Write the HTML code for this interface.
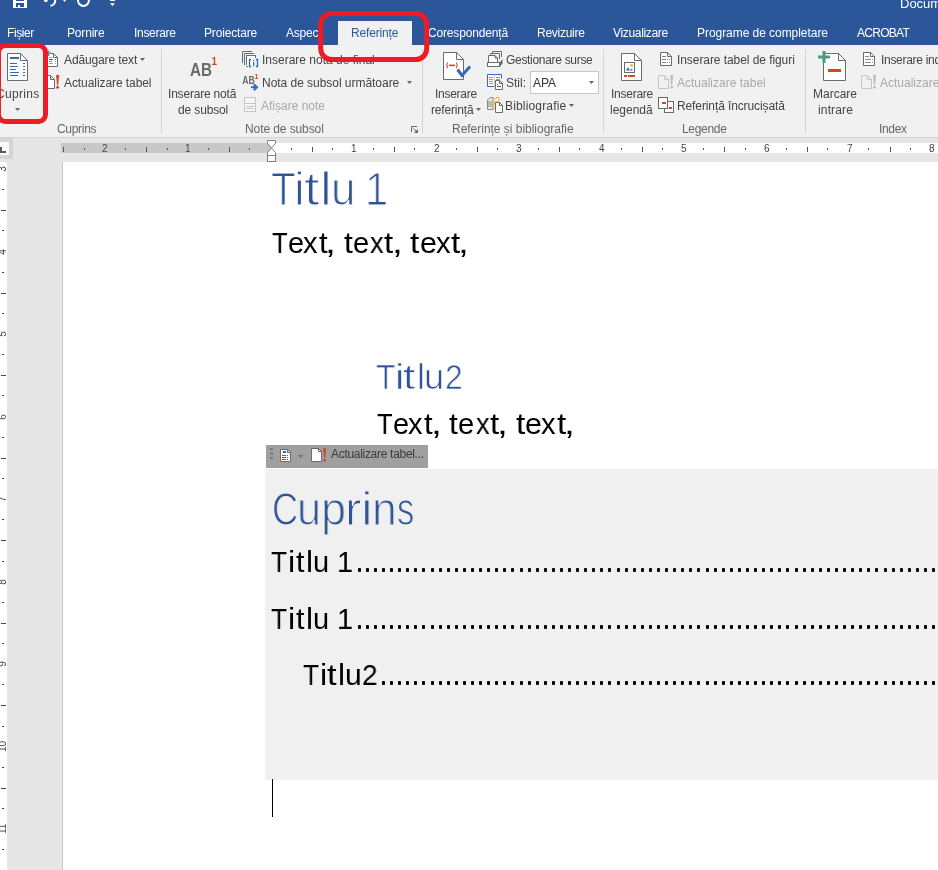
<!DOCTYPE html>
<html><head><meta charset="utf-8"><style>
*{margin:0;padding:0;box-sizing:border-box}
html,body{width:938px;height:870px;overflow:hidden;background:#fff;font-family:"Liberation Sans",sans-serif}
.a{position:absolute;white-space:pre;will-change:transform}
svg{position:absolute;overflow:visible}
#title{position:absolute;left:0;top:0;width:938px;height:45px;background:#2B579A}
.tab{position:absolute;top:27px;font-size:12px;color:#fff;line-height:12px;white-space:pre;will-change:transform}
#ribbon{position:absolute;left:0;top:45px;width:938px;height:92px;background:#F1F1F1}
.rt{position:absolute;font-size:12px;color:#444;line-height:14px;white-space:pre}
.gl{position:absolute;font-size:12px;color:#666;line-height:14px;top:122px;white-space:pre}
.dis{color:#B1B1B1}
.sep{position:absolute;top:49px;width:1px;height:84px;background:#D4D4D4}
#rulerbar{position:absolute;left:0;top:137px;width:938px;height:25px;background:#E6E6E6}
#docbg{position:absolute;left:0;top:161px;width:62px;height:709px;background:#E6E6E6}
#vruler{position:absolute;left:0;top:162px;width:7px;height:708px;background:#fff}
#page{position:absolute;left:62px;top:162px;width:876px;height:708px;background:#fff;border-left:1px solid #C6C6C6}
.h{position:absolute;color:#2F5496;white-space:pre}
.b{position:absolute;color:#000;white-space:pre}
.rn{position:absolute;font-size:9px;line-height:9px;color:#444;white-space:pre;will-change:transform}
</style></head><body>
<div id="title"></div>
<div style="position:absolute;left:338px;top:21px;width:74px;height:24px;background:#F1F1F1"></div>
<div class="tab" style="left:7px;letter-spacing:-0.4px">Fișier</div>
<div class="tab" style="left:67px;letter-spacing:-0.18px">Pornire</div>
<div class="tab" style="left:134px;letter-spacing:-0.3px">Inserare</div>
<div class="tab" style="left:204px;letter-spacing:-0.17px">Proiectare</div>
<div class="tab" style="left:286px;letter-spacing:-0.2px">Aspect</div>
<div class="tab" style="left:351px;letter-spacing:-0.17px;color:#2B579A">Referințe</div>
<div class="tab" style="left:428px;letter-spacing:-0.16px">Corespondență</div>
<div class="tab" style="left:537px;letter-spacing:-0.27px">Revizuire</div>
<div class="tab" style="left:613px;letter-spacing:-0.33px">Vizualizare</div>
<div class="tab" style="left:697px;letter-spacing:-0.05px">Programe de completare</div>
<div class="tab" style="left:857px;letter-spacing:-0.73px">ACROBAT</div>
<div class="a" style="left:900px;top:-3px;font-size:13px;line-height:13px;color:#fff">Docum</div>
<svg style="left:0;top:0" width="130" height="12"><path fill="#fff" fill-rule="evenodd" d="M13 -5H27V8H13Z M16 -5H24V1H16Z M16 3H24V7H20V5H18V7H16Z"/><path d="M55 -0.5A5 5 0 0 1 50.5 5.8" fill="none" stroke="#fff" stroke-width="2"/><path d="M43.5 -1H48.3L47 1.9H44.5Z" fill="#fff"/><circle cx="83.45" cy="0.45" r="5.45" fill="none" stroke="#fff" stroke-width="2"/><path d="M63 0H66.2L64.6 2Z M110 -1H115V1H110Z M110 3.2H115L112.5 5.9Z" fill="#fff"/></svg>
<div id="ribbon"></div>
<div class="sep" style="left:161px"></div>
<div class="sep" style="left:422px"></div>
<div class="sep" style="left:603px"></div>
<div class="sep" style="left:805px"></div>
<div class="a" style="left:-4.3px;top:87.84px;font-size:12px;line-height:12px;color:#444;letter-spacing:0.3px">Cuprins</div>
<svg style="left:15px;top:108px" width="6" height="4"><path d="M0 0H5L2.5 3Z" fill="#666"/></svg>
<div class="a" style="left:63.8px;top:53.54px;font-size:12px;line-height:12px;color:#444;letter-spacing:-0.125px">Adăugare text</div>
<svg style="left:140px;top:58px" width="6" height="4"><path d="M0 0H5L2.5 3Z" fill="#666"/></svg>
<div class="a" style="left:63.8px;top:76.54px;font-size:12px;line-height:12px;color:#444;letter-spacing:-0.075px">Actualizare tabel</div>
<div class="a" style="left:56.8px;top:122.84px;font-size:12px;line-height:12px;color:#666;letter-spacing:-0.300px">Cuprins</div>
<div class="a" style="left:168.3px;top:87.84px;font-size:12px;line-height:12px;color:#444;letter-spacing:-0.200px">Inserare notă</div>
<div class="a" style="left:177.8px;top:103.84px;font-size:12px;line-height:12px;color:#444;letter-spacing:-0.138px">de subsol</div>
<div class="a" style="left:261.5px;top:53.54px;font-size:12px;line-height:12px;color:#444">Inserare nota de final</div>
<div class="a" style="left:261.8px;top:76.54px;font-size:12px;line-height:12px;color:#444;letter-spacing:-0.035px">Nota de subsol următoare</div>
<svg style="left:407px;top:81px" width="6" height="4"><path d="M0 0H5L2.5 3Z" fill="#666"/></svg>
<div class="a" style="left:260.8px;top:99.64px;font-size:12px;line-height:12px;color:#A8A8A8">Afișare note</div>
<div class="a" style="left:245.2px;top:122.84px;font-size:12px;line-height:12px;color:#666;letter-spacing:-0.092px">Note de subsol</div>
<div class="a" style="left:435.40000000000003px;top:87.84px;font-size:12px;line-height:12px;color:#444;letter-spacing:-0.271px">Inserare</div>
<div class="a" style="left:430.8px;top:103.84px;font-size:12px;line-height:12px;color:#444;letter-spacing:-0.175px">referință</div>
<svg style="left:476px;top:108px" width="6" height="4"><path d="M0 0H5L2.5 3Z" fill="#666"/></svg>
<div class="a" style="left:505.7px;top:53.54px;font-size:12px;line-height:12px;color:#444;letter-spacing:-0.307px">Gestionare surse</div>
<div class="a" style="left:506.1px;top:76.54px;font-size:12px;line-height:12px;color:#444">Stil:</div>
<div style="position:absolute;left:530px;top:71px;width:69px;height:23px;background:#fff;border:1px solid #C6C6C6"></div>
<div class="a" style="left:533px;top:76.84px;font-size:12px;line-height:12px;color:#333">APA</div>
<svg style="left:589px;top:81px" width="6" height="4"><path d="M0 0H5L2.5 3Z" fill="#666"/></svg>
<div class="a" style="left:505.3px;top:99.64px;font-size:12px;line-height:12px;color:#444;letter-spacing:0.164px">Bibliografie</div>
<svg style="left:569px;top:104px" width="6" height="4"><path d="M0 0H5L2.5 3Z" fill="#666"/></svg>
<div class="a" style="left:452.40000000000003px;top:122.84px;font-size:12px;line-height:12px;color:#666;letter-spacing:-0.021px">Referințe și bibliografie</div>
<div class="a" style="left:610.8px;top:87.84px;font-size:12px;line-height:12px;color:#444;letter-spacing:-0.257px">Inserare</div>
<div class="a" style="left:610.2px;top:103.84px;font-size:12px;line-height:12px;color:#444">legendă</div>
<div class="a" style="left:677.2px;top:53.54px;font-size:12px;line-height:12px;color:#444;letter-spacing:-0.070px">Inserare tabel de figuri</div>
<div class="a" style="left:677.0px;top:76.54px;font-size:12px;line-height:12px;color:#A8A8A8">Actualizare tabel</div>
<div class="a" style="left:677.0px;top:99.64px;font-size:12px;line-height:12px;color:#444;letter-spacing:-0.110px">Referință încrucișată</div>
<div class="a" style="left:682.2px;top:122.84px;font-size:12px;line-height:12px;color:#666;letter-spacing:-0.317px">Legende</div>
<div class="a" style="left:812.8px;top:87.84px;font-size:12px;line-height:12px;color:#444">Marcare</div>
<div class="a" style="left:817.6px;top:103.84px;font-size:12px;line-height:12px;color:#444;letter-spacing:0.150px">intrare</div>
<div class="a" style="left:880.5px;top:53.54px;font-size:12px;line-height:12px;color:#444;letter-spacing:-0.3px">Inserare index</div>
<div class="a" style="left:880px;top:76.54px;font-size:12px;line-height:12px;color:#A8A8A8">Actualizare tabel</div>
<div class="a" style="left:879.4px;top:122.84px;font-size:12px;line-height:12px;color:#666;letter-spacing:-0.325px">Index</div>
<svg style="left:411px;top:126px" width="8" height="8"><path d="M0.5 6V0.5H6" fill="none" stroke="#666"/><path d="M2.5 2.5L5.5 5.5" stroke="#666"/><path d="M7 3V7H3Z" fill="#666"/></svg>
<div id="rulerbar"></div>
<div id="docbg"></div>
<div id="vruler"></div>
<div id="page"></div>
<div style="position:absolute;left:0;top:137px;width:938px;height:1px;background:#D5D5D5"></div>
<div style="position:absolute;left:0;top:138px;width:13px;height:21px;background:#D6D6D6"></div>
<div style="position:absolute;left:0;top:142px;width:9px;height:13px;background:#FAFAFA"></div>
<div style="position:absolute;left:0;top:147px;width:2px;height:6px;background:#5A5A5A"></div><div style="position:absolute;left:0;top:151px;width:6px;height:2px;background:#5A5A5A"></div>
<div style="position:absolute;left:61px;top:143px;width:210px;height:10px;background:#C8C8C8"></div>
<div style="position:absolute;left:271px;top:143px;width:667px;height:10px;background:#fff"></div>
<div class="rn" style="left:102.4px;top:144px;font-size:10px;line-height:10px">2</div>
<div class="rn" style="left:185.0px;top:144px;font-size:10px;line-height:10px">1</div>
<div class="rn" style="left:351.1px;top:144px;font-size:10px;line-height:10px">1</div>
<div class="rn" style="left:433.7px;top:144px;font-size:10px;line-height:10px">2</div>
<div class="rn" style="left:516.3px;top:144px;font-size:10px;line-height:10px">3</div>
<div class="rn" style="left:598.8px;top:144px;font-size:10px;line-height:10px">4</div>
<div class="rn" style="left:681.4px;top:144px;font-size:10px;line-height:10px">5</div>
<div class="rn" style="left:764.0px;top:144px;font-size:10px;line-height:10px">6</div>
<div class="rn" style="left:846.6px;top:144px;font-size:10px;line-height:10px">7</div>
<div class="rn" style="left:929.1px;top:144px;font-size:10px;line-height:10px">8</div>
<svg style="left:0;top:0" width="938" height="160"><g fill="#555"><rect x="63" y="147" width="1" height="5"/><rect x="84" y="148" width="1" height="2"/><rect x="125" y="148" width="1" height="2"/><rect x="146" y="147" width="1" height="5"/><rect x="167" y="148" width="1" height="2"/><rect x="208" y="148" width="1" height="2"/><rect x="229" y="147" width="1" height="5"/><rect x="249" y="148" width="1" height="2"/><rect x="291" y="148" width="1" height="2"/><rect x="312" y="147" width="1" height="5"/><rect x="332" y="148" width="1" height="2"/><rect x="373" y="148" width="1" height="2"/><rect x="394" y="147" width="1" height="5"/><rect x="414" y="148" width="1" height="2"/><rect x="456" y="148" width="1" height="2"/><rect x="477" y="147" width="1" height="5"/><rect x="497" y="148" width="1" height="2"/><rect x="538" y="148" width="1" height="2"/><rect x="559" y="147" width="1" height="5"/><rect x="579" y="148" width="1" height="2"/><rect x="621" y="148" width="1" height="2"/><rect x="642" y="147" width="1" height="5"/><rect x="662" y="148" width="1" height="2"/><rect x="703" y="148" width="1" height="2"/><rect x="724" y="147" width="1" height="5"/><rect x="745" y="148" width="1" height="2"/><rect x="786" y="148" width="1" height="2"/><rect x="807" y="147" width="1" height="5"/><rect x="827" y="148" width="1" height="2"/><rect x="868" y="148" width="1" height="2"/><rect x="890" y="147" width="1" height="5"/><rect x="910" y="148" width="1" height="2"/></g></svg>
<svg style="left:0;top:0" width="300" height="170"><path d="M267.5 140.5H275.5V143.5L271.5 148L275.5 152.5V155.5H267.5V152.5L271.5 148L267.5 143.5Z" fill="#fff" stroke="#808080"/><rect x="267.5" y="155.5" width="8" height="6" fill="#fff" stroke="#808080"/></svg>
<div class="rn" style="left:-2px;top:163.9px;width:10px;height:10px;font-size:10px;line-height:10px;text-align:center;transform:rotate(-90deg)">3</div>
<div class="rn" style="left:-2px;top:246.5px;width:10px;height:10px;font-size:10px;line-height:10px;text-align:center;transform:rotate(-90deg)">4</div>
<div class="rn" style="left:-2px;top:329.0px;width:10px;height:10px;font-size:10px;line-height:10px;text-align:center;transform:rotate(-90deg)">5</div>
<div class="rn" style="left:-2px;top:411.5px;width:10px;height:10px;font-size:10px;line-height:10px;text-align:center;transform:rotate(-90deg)">6</div>
<div class="rn" style="left:-2px;top:494.1px;width:10px;height:10px;font-size:10px;line-height:10px;text-align:center;transform:rotate(-90deg)">7</div>
<div class="rn" style="left:-2px;top:576.6px;width:10px;height:10px;font-size:10px;line-height:10px;text-align:center;transform:rotate(-90deg)">8</div>
<div class="rn" style="left:-2px;top:659.2px;width:10px;height:10px;font-size:10px;line-height:10px;text-align:center;transform:rotate(-90deg)">9</div>
<div class="rn" style="left:-2px;top:741.8px;width:10px;height:10px;font-size:10px;line-height:10px;text-align:center;transform:rotate(-90deg)">10</div>
<div class="rn" style="left:-2px;top:824.3px;width:10px;height:10px;font-size:10px;line-height:10px;text-align:center;transform:rotate(-90deg)">11</div>
<svg style="left:0;top:0" width="10" height="870"><g fill="#444"><rect x="2" y="189" width="2" height="1"/><rect x="1" y="210" width="5" height="1"/><rect x="2" y="230" width="2" height="1"/><rect x="2" y="272" width="2" height="1"/><rect x="1" y="293" width="5" height="1"/><rect x="2" y="313" width="2" height="1"/><rect x="2" y="354" width="2" height="1"/><rect x="1" y="375" width="5" height="1"/><rect x="2" y="395" width="2" height="1"/><rect x="2" y="437" width="2" height="1"/><rect x="1" y="458" width="5" height="1"/><rect x="2" y="478" width="2" height="1"/><rect x="2" y="519" width="2" height="1"/><rect x="1" y="540" width="5" height="1"/><rect x="2" y="561" width="2" height="1"/><rect x="2" y="602" width="2" height="1"/><rect x="1" y="623" width="5" height="1"/><rect x="2" y="643" width="2" height="1"/><rect x="2" y="684" width="2" height="1"/><rect x="1" y="705" width="5" height="1"/><rect x="2" y="726" width="2" height="1"/><rect x="2" y="767" width="2" height="1"/><rect x="1" y="788" width="5" height="1"/><rect x="2" y="808" width="2" height="1"/><rect x="2" y="849" width="2" height="1"/></g></svg>
<div class="a" style="left:270.74px;top:166.24px;font-size:46.5px;line-height:46.5px;color:#2F5496;-webkit-text-stroke:1.1px #fff;transform:scaleX(0.867);transform-origin:0 0">T</div>
<div class="a" style="left:294.02px;top:166.24px;font-size:46.5px;line-height:46.5px;color:#2F5496;-webkit-text-stroke:1.1px #fff;transform:scaleX(1.041);transform-origin:0 0">i</div>
<div class="a" style="left:304.11px;top:166.24px;font-size:46.5px;line-height:46.5px;color:#2F5496;-webkit-text-stroke:1.1px #fff;transform:scaleX(1.201);transform-origin:0 0">t</div>
<div class="a" style="left:319.73px;top:166.24px;font-size:46.5px;line-height:46.5px;color:#2F5496;-webkit-text-stroke:1.1px #fff;transform:scaleX(1.138);transform-origin:0 0">l</div>
<div class="a" style="left:330.74px;top:166.24px;font-size:46.5px;line-height:46.5px;color:#2F5496;-webkit-text-stroke:1.1px #fff;transform:scaleX(0.944);transform-origin:0 0">u</div>
<div class="a" style="left:365.47px;top:166.24px;font-size:46.5px;line-height:46.5px;color:#2F5496;-webkit-text-stroke:1.1px #fff;transform:scaleX(0.896);transform-origin:0 0">1</div>
<div class="a" style="left:271.87px;top:229.45px;font-size:29px;line-height:29px;color:#000;;transform:scaleX(0.885);transform-origin:0 0">T</div>
<div class="a" style="left:287.60px;top:229.45px;font-size:29px;line-height:29px;color:#000;;transform:scaleX(0.992);transform-origin:0 0">e</div>
<div class="a" style="left:302.70px;top:229.45px;font-size:29px;line-height:29px;color:#000;;transform:scaleX(0.998);transform-origin:0 0">x</div>
<div class="a" style="left:318.59px;top:229.45px;font-size:29px;line-height:29px;color:#000;;transform:scaleX(1.073);transform-origin:0 0">t</div>
<div class="a" style="left:325.24px;top:229.45px;font-size:29px;line-height:29px;color:#000;;transform:scaleX(1.350);transform-origin:0 0">,</div>
<div class="a" style="left:343.88px;top:229.45px;font-size:29px;line-height:29px;color:#000;;transform:scaleX(1.098);transform-origin:0 0">t</div>
<div class="a" style="left:353.09px;top:229.45px;font-size:29px;line-height:29px;color:#000;;transform:scaleX(1.006);transform-origin:0 0">e</div>
<div class="a" style="left:370.23px;top:229.45px;font-size:29px;line-height:29px;color:#000;;transform:scaleX(0.939);transform-origin:0 0">x</div>
<div class="a" style="left:384.47px;top:229.45px;font-size:29px;line-height:29px;color:#000;;transform:scaleX(1.137);transform-origin:0 0">t</div>
<div class="a" style="left:391.64px;top:229.45px;font-size:29px;line-height:29px;color:#000;;transform:scaleX(1.350);transform-origin:0 0">,</div>
<div class="a" style="left:410.26px;top:229.45px;font-size:29px;line-height:29px;color:#000;;transform:scaleX(1.150);transform-origin:0 0">t</div>
<div class="a" style="left:419.73px;top:229.45px;font-size:29px;line-height:29px;color:#000;;transform:scaleX(1.049);transform-origin:0 0">e</div>
<div class="a" style="left:435.59px;top:229.45px;font-size:29px;line-height:29px;color:#000;;transform:scaleX(1.005);transform-origin:0 0">x</div>
<div class="a" style="left:451.26px;top:229.45px;font-size:29px;line-height:29px;color:#000;;transform:scaleX(1.150);transform-origin:0 0">t</div>
<div class="a" style="left:458.14px;top:229.45px;font-size:29px;line-height:29px;color:#000;;transform:scaleX(1.350);transform-origin:0 0">,</div>
<div class="a" style="left:376.33px;top:359.50px;font-size:35.8px;line-height:35.8px;color:#2F5496;-webkit-text-stroke:0.6px #fff;transform:scaleX(0.885);transform-origin:0 0">T</div>
<div class="a" style="left:394.91px;top:359.50px;font-size:35.8px;line-height:35.8px;color:#2F5496;-webkit-text-stroke:0.6px #fff;transform:scaleX(1.180);transform-origin:0 0">i</div>
<div class="a" style="left:403.23px;top:359.50px;font-size:35.8px;line-height:35.8px;color:#2F5496;-webkit-text-stroke:0.6px #fff;transform:scaleX(1.223);transform-origin:0 0">t</div>
<div class="a" style="left:416.93px;top:359.50px;font-size:35.8px;line-height:35.8px;color:#2F5496;-webkit-text-stroke:0.6px #fff;transform:scaleX(0.986);transform-origin:0 0">l</div>
<div class="a" style="left:424.09px;top:359.50px;font-size:35.8px;line-height:35.8px;color:#2F5496;-webkit-text-stroke:0.6px #fff;transform:scaleX(1.014);transform-origin:0 0">u</div>
<div class="a" style="left:444.83px;top:359.50px;font-size:35.8px;line-height:35.8px;color:#2F5496;-webkit-text-stroke:0.6px #fff;transform:scaleX(0.892);transform-origin:0 0">2</div>
<div class="a" style="left:377.27px;top:409.65px;font-size:29px;line-height:29px;color:#000;;transform:scaleX(0.885);transform-origin:0 0">T</div>
<div class="a" style="left:393.00px;top:409.65px;font-size:29px;line-height:29px;color:#000;;transform:scaleX(0.992);transform-origin:0 0">e</div>
<div class="a" style="left:408.10px;top:409.65px;font-size:29px;line-height:29px;color:#000;;transform:scaleX(0.998);transform-origin:0 0">x</div>
<div class="a" style="left:423.99px;top:409.65px;font-size:29px;line-height:29px;color:#000;;transform:scaleX(1.073);transform-origin:0 0">t</div>
<div class="a" style="left:430.64px;top:409.65px;font-size:29px;line-height:29px;color:#000;;transform:scaleX(1.350);transform-origin:0 0">,</div>
<div class="a" style="left:449.28px;top:409.65px;font-size:29px;line-height:29px;color:#000;;transform:scaleX(1.098);transform-origin:0 0">t</div>
<div class="a" style="left:458.49px;top:409.65px;font-size:29px;line-height:29px;color:#000;;transform:scaleX(1.006);transform-origin:0 0">e</div>
<div class="a" style="left:475.63px;top:409.65px;font-size:29px;line-height:29px;color:#000;;transform:scaleX(0.939);transform-origin:0 0">x</div>
<div class="a" style="left:489.87px;top:409.65px;font-size:29px;line-height:29px;color:#000;;transform:scaleX(1.137);transform-origin:0 0">t</div>
<div class="a" style="left:497.04px;top:409.65px;font-size:29px;line-height:29px;color:#000;;transform:scaleX(1.350);transform-origin:0 0">,</div>
<div class="a" style="left:515.66px;top:409.65px;font-size:29px;line-height:29px;color:#000;;transform:scaleX(1.150);transform-origin:0 0">t</div>
<div class="a" style="left:525.13px;top:409.65px;font-size:29px;line-height:29px;color:#000;;transform:scaleX(1.049);transform-origin:0 0">e</div>
<div class="a" style="left:540.99px;top:409.65px;font-size:29px;line-height:29px;color:#000;;transform:scaleX(1.005);transform-origin:0 0">x</div>
<div class="a" style="left:556.66px;top:409.65px;font-size:29px;line-height:29px;color:#000;;transform:scaleX(1.150);transform-origin:0 0">t</div>
<div class="a" style="left:563.54px;top:409.65px;font-size:29px;line-height:29px;color:#000;;transform:scaleX(1.350);transform-origin:0 0">,</div>
<div style="position:absolute;left:265px;top:469px;width:673px;height:310.5px;background:#F0F0F0"></div>
<div style="position:absolute;left:266px;top:445px;width:162px;height:23px;background:#A0A0A0"></div>
<div class="a" style="left:330.6px;top:448.24px;font-size:12px;line-height:12px;color:#3A3A3A;letter-spacing:-0.3px">Actualizare tabel...</div>
<div class="a" style="left:271.89px;top:486.24px;font-size:46.5px;line-height:46.5px;color:#2F5496;-webkit-text-stroke:1.1px #F0F0F0;transform:scaleX(0.781);transform-origin:0 0">C</div>
<div class="a" style="left:297.24px;top:486.24px;font-size:46.5px;line-height:46.5px;color:#2F5496;-webkit-text-stroke:1.1px #F0F0F0;transform:scaleX(0.928);transform-origin:0 0">u</div>
<div class="a" style="left:320.96px;top:486.24px;font-size:46.5px;line-height:46.5px;color:#2F5496;-webkit-text-stroke:1.1px #F0F0F0;transform:scaleX(0.970);transform-origin:0 0">p</div>
<div class="a" style="left:345.28px;top:486.24px;font-size:46.5px;line-height:46.5px;color:#2F5496;-webkit-text-stroke:1.1px #F0F0F0;transform:scaleX(1.058);transform-origin:0 0">r</div>
<div class="a" style="left:360.84px;top:486.24px;font-size:46.5px;line-height:46.5px;color:#2F5496;-webkit-text-stroke:1.1px #F0F0F0;transform:scaleX(1.131);transform-origin:0 0">i</div>
<div class="a" style="left:371.75px;top:486.24px;font-size:46.5px;line-height:46.5px;color:#2F5496;-webkit-text-stroke:1.1px #F0F0F0;transform:scaleX(0.958);transform-origin:0 0">n</div>
<div class="a" style="left:396.61px;top:486.24px;font-size:46.5px;line-height:46.5px;color:#2F5496;-webkit-text-stroke:1.1px #F0F0F0;transform:scaleX(0.741);transform-origin:0 0">s</div>
<div class="a" style="left:271.46px;top:548.05px;font-size:29px;line-height:29px;color:#000;;transform:scaleX(0.903);transform-origin:0 0">T</div>
<div class="a" style="left:287.85px;top:548.05px;font-size:29px;line-height:29px;color:#000;;transform:scaleX(1.121);transform-origin:0 0">i</div>
<div class="a" style="left:296.40px;top:548.05px;font-size:29px;line-height:29px;color:#000;;transform:scaleX(1.047);transform-origin:0 0">t</div>
<div class="a" style="left:306.07px;top:548.05px;font-size:29px;line-height:29px;color:#000;;transform:scaleX(1.095);transform-origin:0 0">l</div>
<div class="a" style="left:313.20px;top:548.05px;font-size:29px;line-height:29px;color:#000;;transform:scaleX(0.996);transform-origin:0 0">u</div>
<div class="a" style="left:337.38px;top:548.05px;font-size:29px;line-height:29px;color:#000;;transform:scaleX(0.982);transform-origin:0 0">1</div>
<div class="a" style="left:271.46px;top:604.95px;font-size:29px;line-height:29px;color:#000;;transform:scaleX(0.903);transform-origin:0 0">T</div>
<div class="a" style="left:287.85px;top:604.95px;font-size:29px;line-height:29px;color:#000;;transform:scaleX(1.121);transform-origin:0 0">i</div>
<div class="a" style="left:296.40px;top:604.95px;font-size:29px;line-height:29px;color:#000;;transform:scaleX(1.047);transform-origin:0 0">t</div>
<div class="a" style="left:306.07px;top:604.95px;font-size:29px;line-height:29px;color:#000;;transform:scaleX(1.095);transform-origin:0 0">l</div>
<div class="a" style="left:313.20px;top:604.95px;font-size:29px;line-height:29px;color:#000;;transform:scaleX(0.996);transform-origin:0 0">u</div>
<div class="a" style="left:337.38px;top:604.95px;font-size:29px;line-height:29px;color:#000;;transform:scaleX(0.982);transform-origin:0 0">1</div>
<div class="a" style="left:303.46px;top:660.65px;font-size:29px;line-height:29px;color:#000;;transform:scaleX(0.903);transform-origin:0 0">T</div>
<div class="a" style="left:319.85px;top:660.65px;font-size:29px;line-height:29px;color:#000;;transform:scaleX(1.121);transform-origin:0 0">i</div>
<div class="a" style="left:327.35px;top:660.65px;font-size:29px;line-height:29px;color:#000;;transform:scaleX(1.189);transform-origin:0 0">t</div>
<div class="a" style="left:338.07px;top:660.65px;font-size:29px;line-height:29px;color:#000;;transform:scaleX(1.095);transform-origin:0 0">l</div>
<div class="a" style="left:345.13px;top:660.65px;font-size:29px;line-height:29px;color:#000;;transform:scaleX(1.036);transform-origin:0 0">u</div>
<div class="a" style="left:362.44px;top:660.65px;font-size:29px;line-height:29px;color:#000;;transform:scaleX(0.967);transform-origin:0 0">2</div>
<svg style="left:0;top:0" width="938" height="870"><g fill="#000"><rect x="358" y="568" width="3" height="4" rx="0.9"/><rect x="366" y="568" width="3" height="4" rx="0.9"/><rect x="374" y="568" width="3" height="4" rx="0.9"/><rect x="382" y="568" width="3" height="4" rx="0.9"/><rect x="390" y="568" width="3" height="4" rx="0.9"/><rect x="398" y="568" width="3" height="4" rx="0.9"/><rect x="406" y="568" width="3" height="4" rx="0.9"/><rect x="414" y="568" width="3" height="4" rx="0.9"/><rect x="422" y="568" width="3" height="4" rx="0.9"/><rect x="431" y="568" width="3" height="4" rx="0.9"/><rect x="439" y="568" width="3" height="4" rx="0.9"/><rect x="447" y="568" width="3" height="4" rx="0.9"/><rect x="455" y="568" width="3" height="4" rx="0.9"/><rect x="463" y="568" width="3" height="4" rx="0.9"/><rect x="471" y="568" width="3" height="4" rx="0.9"/><rect x="479" y="568" width="3" height="4" rx="0.9"/><rect x="487" y="568" width="3" height="4" rx="0.9"/><rect x="495" y="568" width="3" height="4" rx="0.9"/><rect x="503" y="568" width="3" height="4" rx="0.9"/><rect x="511" y="568" width="3" height="4" rx="0.9"/><rect x="520" y="568" width="3" height="4" rx="0.9"/><rect x="528" y="568" width="3" height="4" rx="0.9"/><rect x="536" y="568" width="3" height="4" rx="0.9"/><rect x="544" y="568" width="3" height="4" rx="0.9"/><rect x="552" y="568" width="3" height="4" rx="0.9"/><rect x="560" y="568" width="3" height="4" rx="0.9"/><rect x="568" y="568" width="3" height="4" rx="0.9"/><rect x="576" y="568" width="3" height="4" rx="0.9"/><rect x="584" y="568" width="3" height="4" rx="0.9"/><rect x="592" y="568" width="3" height="4" rx="0.9"/><rect x="600" y="568" width="3" height="4" rx="0.9"/><rect x="608" y="568" width="3" height="4" rx="0.9"/><rect x="617" y="568" width="3" height="4" rx="0.9"/><rect x="625" y="568" width="3" height="4" rx="0.9"/><rect x="633" y="568" width="3" height="4" rx="0.9"/><rect x="641" y="568" width="3" height="4" rx="0.9"/><rect x="649" y="568" width="3" height="4" rx="0.9"/><rect x="657" y="568" width="3" height="4" rx="0.9"/><rect x="665" y="568" width="3" height="4" rx="0.9"/><rect x="673" y="568" width="3" height="4" rx="0.9"/><rect x="681" y="568" width="3" height="4" rx="0.9"/><rect x="689" y="568" width="3" height="4" rx="0.9"/><rect x="697" y="568" width="3" height="4" rx="0.9"/><rect x="706" y="568" width="3" height="4" rx="0.9"/><rect x="714" y="568" width="3" height="4" rx="0.9"/><rect x="722" y="568" width="3" height="4" rx="0.9"/><rect x="730" y="568" width="3" height="4" rx="0.9"/><rect x="738" y="568" width="3" height="4" rx="0.9"/><rect x="746" y="568" width="3" height="4" rx="0.9"/><rect x="754" y="568" width="3" height="4" rx="0.9"/><rect x="762" y="568" width="3" height="4" rx="0.9"/><rect x="770" y="568" width="3" height="4" rx="0.9"/><rect x="778" y="568" width="3" height="4" rx="0.9"/><rect x="786" y="568" width="3" height="4" rx="0.9"/><rect x="795" y="568" width="3" height="4" rx="0.9"/><rect x="803" y="568" width="3" height="4" rx="0.9"/><rect x="811" y="568" width="3" height="4" rx="0.9"/><rect x="819" y="568" width="3" height="4" rx="0.9"/><rect x="827" y="568" width="3" height="4" rx="0.9"/><rect x="835" y="568" width="3" height="4" rx="0.9"/><rect x="843" y="568" width="3" height="4" rx="0.9"/><rect x="851" y="568" width="3" height="4" rx="0.9"/><rect x="859" y="568" width="3" height="4" rx="0.9"/><rect x="867" y="568" width="3" height="4" rx="0.9"/><rect x="875" y="568" width="3" height="4" rx="0.9"/><rect x="884" y="568" width="3" height="4" rx="0.9"/><rect x="892" y="568" width="3" height="4" rx="0.9"/><rect x="900" y="568" width="3" height="4" rx="0.9"/><rect x="908" y="568" width="3" height="4" rx="0.9"/><rect x="916" y="568" width="3" height="4" rx="0.9"/><rect x="924" y="568" width="3" height="4" rx="0.9"/><rect x="932" y="568" width="3" height="4" rx="0.9"/><rect x="358" y="625" width="3" height="4" rx="0.9"/><rect x="366" y="625" width="3" height="4" rx="0.9"/><rect x="374" y="625" width="3" height="4" rx="0.9"/><rect x="382" y="625" width="3" height="4" rx="0.9"/><rect x="390" y="625" width="3" height="4" rx="0.9"/><rect x="398" y="625" width="3" height="4" rx="0.9"/><rect x="406" y="625" width="3" height="4" rx="0.9"/><rect x="414" y="625" width="3" height="4" rx="0.9"/><rect x="422" y="625" width="3" height="4" rx="0.9"/><rect x="431" y="625" width="3" height="4" rx="0.9"/><rect x="439" y="625" width="3" height="4" rx="0.9"/><rect x="447" y="625" width="3" height="4" rx="0.9"/><rect x="455" y="625" width="3" height="4" rx="0.9"/><rect x="463" y="625" width="3" height="4" rx="0.9"/><rect x="471" y="625" width="3" height="4" rx="0.9"/><rect x="479" y="625" width="3" height="4" rx="0.9"/><rect x="487" y="625" width="3" height="4" rx="0.9"/><rect x="495" y="625" width="3" height="4" rx="0.9"/><rect x="503" y="625" width="3" height="4" rx="0.9"/><rect x="511" y="625" width="3" height="4" rx="0.9"/><rect x="520" y="625" width="3" height="4" rx="0.9"/><rect x="528" y="625" width="3" height="4" rx="0.9"/><rect x="536" y="625" width="3" height="4" rx="0.9"/><rect x="544" y="625" width="3" height="4" rx="0.9"/><rect x="552" y="625" width="3" height="4" rx="0.9"/><rect x="560" y="625" width="3" height="4" rx="0.9"/><rect x="568" y="625" width="3" height="4" rx="0.9"/><rect x="576" y="625" width="3" height="4" rx="0.9"/><rect x="584" y="625" width="3" height="4" rx="0.9"/><rect x="592" y="625" width="3" height="4" rx="0.9"/><rect x="600" y="625" width="3" height="4" rx="0.9"/><rect x="608" y="625" width="3" height="4" rx="0.9"/><rect x="617" y="625" width="3" height="4" rx="0.9"/><rect x="625" y="625" width="3" height="4" rx="0.9"/><rect x="633" y="625" width="3" height="4" rx="0.9"/><rect x="641" y="625" width="3" height="4" rx="0.9"/><rect x="649" y="625" width="3" height="4" rx="0.9"/><rect x="657" y="625" width="3" height="4" rx="0.9"/><rect x="665" y="625" width="3" height="4" rx="0.9"/><rect x="673" y="625" width="3" height="4" rx="0.9"/><rect x="681" y="625" width="3" height="4" rx="0.9"/><rect x="689" y="625" width="3" height="4" rx="0.9"/><rect x="697" y="625" width="3" height="4" rx="0.9"/><rect x="706" y="625" width="3" height="4" rx="0.9"/><rect x="714" y="625" width="3" height="4" rx="0.9"/><rect x="722" y="625" width="3" height="4" rx="0.9"/><rect x="730" y="625" width="3" height="4" rx="0.9"/><rect x="738" y="625" width="3" height="4" rx="0.9"/><rect x="746" y="625" width="3" height="4" rx="0.9"/><rect x="754" y="625" width="3" height="4" rx="0.9"/><rect x="762" y="625" width="3" height="4" rx="0.9"/><rect x="770" y="625" width="3" height="4" rx="0.9"/><rect x="778" y="625" width="3" height="4" rx="0.9"/><rect x="786" y="625" width="3" height="4" rx="0.9"/><rect x="795" y="625" width="3" height="4" rx="0.9"/><rect x="803" y="625" width="3" height="4" rx="0.9"/><rect x="811" y="625" width="3" height="4" rx="0.9"/><rect x="819" y="625" width="3" height="4" rx="0.9"/><rect x="827" y="625" width="3" height="4" rx="0.9"/><rect x="835" y="625" width="3" height="4" rx="0.9"/><rect x="843" y="625" width="3" height="4" rx="0.9"/><rect x="851" y="625" width="3" height="4" rx="0.9"/><rect x="859" y="625" width="3" height="4" rx="0.9"/><rect x="867" y="625" width="3" height="4" rx="0.9"/><rect x="875" y="625" width="3" height="4" rx="0.9"/><rect x="884" y="625" width="3" height="4" rx="0.9"/><rect x="892" y="625" width="3" height="4" rx="0.9"/><rect x="900" y="625" width="3" height="4" rx="0.9"/><rect x="908" y="625" width="3" height="4" rx="0.9"/><rect x="916" y="625" width="3" height="4" rx="0.9"/><rect x="924" y="625" width="3" height="4" rx="0.9"/><rect x="932" y="625" width="3" height="4" rx="0.9"/><rect x="382" y="681" width="3" height="4" rx="0.9"/><rect x="390" y="681" width="3" height="4" rx="0.9"/><rect x="398" y="681" width="3" height="4" rx="0.9"/><rect x="406" y="681" width="3" height="4" rx="0.9"/><rect x="414" y="681" width="3" height="4" rx="0.9"/><rect x="422" y="681" width="3" height="4" rx="0.9"/><rect x="431" y="681" width="3" height="4" rx="0.9"/><rect x="439" y="681" width="3" height="4" rx="0.9"/><rect x="447" y="681" width="3" height="4" rx="0.9"/><rect x="455" y="681" width="3" height="4" rx="0.9"/><rect x="463" y="681" width="3" height="4" rx="0.9"/><rect x="471" y="681" width="3" height="4" rx="0.9"/><rect x="479" y="681" width="3" height="4" rx="0.9"/><rect x="487" y="681" width="3" height="4" rx="0.9"/><rect x="495" y="681" width="3" height="4" rx="0.9"/><rect x="503" y="681" width="3" height="4" rx="0.9"/><rect x="511" y="681" width="3" height="4" rx="0.9"/><rect x="520" y="681" width="3" height="4" rx="0.9"/><rect x="528" y="681" width="3" height="4" rx="0.9"/><rect x="536" y="681" width="3" height="4" rx="0.9"/><rect x="544" y="681" width="3" height="4" rx="0.9"/><rect x="552" y="681" width="3" height="4" rx="0.9"/><rect x="560" y="681" width="3" height="4" rx="0.9"/><rect x="568" y="681" width="3" height="4" rx="0.9"/><rect x="576" y="681" width="3" height="4" rx="0.9"/><rect x="584" y="681" width="3" height="4" rx="0.9"/><rect x="592" y="681" width="3" height="4" rx="0.9"/><rect x="600" y="681" width="3" height="4" rx="0.9"/><rect x="608" y="681" width="3" height="4" rx="0.9"/><rect x="617" y="681" width="3" height="4" rx="0.9"/><rect x="625" y="681" width="3" height="4" rx="0.9"/><rect x="633" y="681" width="3" height="4" rx="0.9"/><rect x="641" y="681" width="3" height="4" rx="0.9"/><rect x="649" y="681" width="3" height="4" rx="0.9"/><rect x="657" y="681" width="3" height="4" rx="0.9"/><rect x="665" y="681" width="3" height="4" rx="0.9"/><rect x="673" y="681" width="3" height="4" rx="0.9"/><rect x="681" y="681" width="3" height="4" rx="0.9"/><rect x="689" y="681" width="3" height="4" rx="0.9"/><rect x="697" y="681" width="3" height="4" rx="0.9"/><rect x="706" y="681" width="3" height="4" rx="0.9"/><rect x="714" y="681" width="3" height="4" rx="0.9"/><rect x="722" y="681" width="3" height="4" rx="0.9"/><rect x="730" y="681" width="3" height="4" rx="0.9"/><rect x="738" y="681" width="3" height="4" rx="0.9"/><rect x="746" y="681" width="3" height="4" rx="0.9"/><rect x="754" y="681" width="3" height="4" rx="0.9"/><rect x="762" y="681" width="3" height="4" rx="0.9"/><rect x="770" y="681" width="3" height="4" rx="0.9"/><rect x="778" y="681" width="3" height="4" rx="0.9"/><rect x="786" y="681" width="3" height="4" rx="0.9"/><rect x="795" y="681" width="3" height="4" rx="0.9"/><rect x="803" y="681" width="3" height="4" rx="0.9"/><rect x="811" y="681" width="3" height="4" rx="0.9"/><rect x="819" y="681" width="3" height="4" rx="0.9"/><rect x="827" y="681" width="3" height="4" rx="0.9"/><rect x="835" y="681" width="3" height="4" rx="0.9"/><rect x="843" y="681" width="3" height="4" rx="0.9"/><rect x="851" y="681" width="3" height="4" rx="0.9"/><rect x="859" y="681" width="3" height="4" rx="0.9"/><rect x="867" y="681" width="3" height="4" rx="0.9"/><rect x="875" y="681" width="3" height="4" rx="0.9"/><rect x="884" y="681" width="3" height="4" rx="0.9"/><rect x="892" y="681" width="3" height="4" rx="0.9"/><rect x="900" y="681" width="3" height="4" rx="0.9"/><rect x="908" y="681" width="3" height="4" rx="0.9"/><rect x="916" y="681" width="3" height="4" rx="0.9"/><rect x="924" y="681" width="3" height="4" rx="0.9"/><rect x="932" y="681" width="3" height="4" rx="0.9"/></g></svg>
<div style="position:absolute;left:272px;top:779px;width:1px;height:38px;background:#000"></div>
<svg style="left:0;top:0" width="938" height="140"><path d="M7.5 53.5H20.5L27.5 60.5V80.5H7.5Z" fill="#fff" stroke="#6B6B6B"/><path d="M20.5 53.5V60.5H27.5" fill="none" stroke="#6B6B6B"/><rect x="10" y="57" width="9" height="2" fill="#2E6DB4"/><rect x="10" y="63" width="7" height="1" fill="#2E6DB4"/><rect x="23" y="63" width="2" height="1" fill="#2E6DB4"/><rect x="10" y="66" width="8" height="1" fill="#2E6DB4"/><rect x="23" y="66" width="2" height="1" fill="#2E6DB4"/><rect x="10" y="69" width="6" height="1" fill="#2E6DB4"/><rect x="23" y="69" width="2" height="1" fill="#2E6DB4"/><rect x="10" y="72" width="9" height="1" fill="#2E6DB4"/><rect x="23" y="72" width="2" height="1" fill="#2E6DB4"/><rect x="10" y="75" width="8" height="1" fill="#2E6DB4"/><rect x="23" y="75" width="2" height="1" fill="#2E6DB4"/><path d="M47.5 53.5H53.5L57.5 57.5V66.5H47.5Z" fill="#fff" stroke="#6B6B6B"/><path d="M53.5 53.5V57.5H57.5" fill="none" stroke="#6B6B6B"/><rect x="49" y="57" width="3" height="1" fill="#999"/><rect x="49" y="59" width="4" height="1" fill="#2E6DB4"/><rect x="55" y="59" width="1" height="1" fill="#2E6DB4"/><rect x="49" y="61" width="3" height="1" fill="#999"/><rect x="55" y="61" width="1" height="1" fill="#999"/><rect x="49" y="63" width="4" height="1" fill="#999"/><rect x="55" y="63" width="1" height="1" fill="#999"/><path d="M48.5 50.5V56M45.5 53.3H51.3" stroke="#4E9A7A" stroke-width="1.6"/><path d="M46.5 75.5H50.5L54.5 79.5V88.5H46.5Z" fill="#fff" stroke="#6B6B6B"/><path d="M50.5 75.5V79.5H54.5" fill="none" stroke="#6B6B6B"/><path d="M56 75H59.2L58.2 85H57Z" fill="#D24726"/><circle cx="57.6" cy="87.2" r="1.5" fill="#D24726"/><text x="190" y="75.8" font-family="Liberation Sans" font-weight="bold" font-size="18.5" fill="#6B6B6B" textLength="22" lengthAdjust="spacingAndGlyphs">AB</text><text x="211.5" y="65.2" font-family="Liberation Sans" font-weight="bold" font-size="11" fill="#D24726" textLength="5.5" lengthAdjust="spacingAndGlyphs">1</text><g fill="none" stroke="#6B6B6B"><path d="M242.5 63V51.5H252"/><path d="M244.5 65V53.5H254"/><path d="M248 66.5H246.5V55.5H255.5V58"/></g><rect x="246" y="56" width="9" height="10" fill="#fff"/><path d="M246.5 65V55.5H255.5V58" fill="none" stroke="#6B6B6B"/><path d="M251 59.5H249.5V66.5H251M256 59.5H257.5V66.5H256" fill="none" stroke="#2E6DB4" stroke-width="1.3"/><rect x="253" y="59.8" width="1.3" height="1.3" fill="#2E6DB4"/><rect x="253" y="62" width="1.3" height="4.2" fill="#2E6DB4"/><text x="242.2" y="83.8" font-family="Liberation Sans" font-weight="bold" font-size="10.3" fill="#6B6B6B" textLength="12.6" lengthAdjust="spacingAndGlyphs">AB</text><text x="254.6" y="79.2" font-family="Liberation Sans" font-weight="bold" font-size="7.2" fill="#D24726">1</text><path d="M251 87.2H256.5M253.8 84.2L257 87.2L253.8 90.2" fill="none" stroke="#2E6DB4" stroke-width="2"/><rect x="244.5" y="97.5" width="11" height="14" fill="#F6F6F6" stroke="#C6C6C6"/><path d="M244.5 103.5H255.5M246 106.5H254M246 108.5H254" stroke="#C6C6C6"/><path d="M443.5 52.5H456.5L463.5 59.5V79.5H443.5Z" fill="#fff" stroke="#6B6B6B"/><path d="M456.5 52.5V59.5H463.5" fill="none" stroke="#6B6B6B"/><path d="M447.5 62.5Q446 65.3 447.5 68.2M456.5 62.5Q458 65.3 456.5 68.2" fill="none" stroke="#D24726" stroke-width="1.1"/><rect x="449" y="64.6" width="6" height="1.6" fill="#D24726"/><path d="M457.5 69.5L462 75.5L470 66.5" fill="none" stroke="#2E6DB4" stroke-width="3"/><g fill="none" stroke="#6B6B6B"><path d="M492.5 53V51.5H501.5V57"/><path d="M490.5 55V53.5H499.5V59"/></g><path d="M488.5 62V55.5H495L497.5 58V62" fill="#fff" stroke="#6B6B6B"/><path d="M495 55.5V58H497.5" fill="none" stroke="#6B6B6B"/><rect x="487.5" y="62.5" width="12" height="4" fill="#fff" stroke="#6B6B6B"/><path d="M500 66.5V62L502.5 59V63.5Z" fill="#6B6B6B"/><path d="M494.5 86.5H487.5V74.5H501.5V78.5" fill="#fff" stroke="#2E6DB4"/><path d="M494.5 74.5V86.5" stroke="#CCC"/><g fill="#999"><rect x="489" y="77" width="4" height="1"/><rect x="489" y="79" width="4" height="1"/><rect x="489" y="81" width="4" height="1"/><rect x="489" y="83" width="4" height="1"/><rect x="496" y="77" width="4" height="1"/><rect x="496" y="79" width="4" height="1"/></g><path d="M495.5 80.5H499.5L502.5 83.5V89.5H495.5Z" fill="#fff" stroke="#6B6B6B"/><path d="M499.5 80.5V83.5H502.5" fill="none" stroke="#6B6B6B"/><rect x="497" y="86" width="4" height="1" fill="#2E6DB4"/><rect x="497" y="84" width="1" height="1" fill="#2E6DB4"/><path d="M487.5 109.5V100L490 97.5H493V109.5Z" fill="#E6E6E6" stroke="#8A8A8A"/><path d="M488 102H492M488 104H492M488 106H492" stroke="#8A8A8A"/><path d="M493.5 108.5V100L496 97.5H499V108.5Z" fill="#FBE9C8" stroke="#E8B25A"/><path d="M494 102H498M494 104H498" stroke="#E8B25A"/><path d="M495.5 102.5H499.5L502.5 105.5V112.5H495.5Z" fill="#fff" stroke="#6B6B6B"/><path d="M499.5 102.5V105.5H502.5" fill="none" stroke="#6B6B6B"/><path d="M621.5 53.5H634.5L641.5 60.5V80.5H621.5Z" fill="#fff" stroke="#6B6B6B"/><path d="M634.5 53.5V60.5H641.5" fill="none" stroke="#6B6B6B"/><rect x="624.5" y="62.5" width="10" height="10" fill="#fff" stroke="#6B6B6B"/><circle cx="631.6" cy="65.3" r="1.4" fill="#E9B44C"/><path d="M626 70.6L628 67L630 70.6L631.5 68.5L633 70.6Z" fill="#2E6DB4"/><rect x="624" y="75" width="3" height="2" fill="#D24726"/><rect x="628" y="75" width="7" height="2" fill="#D24726"/><path d="M660.5 52.5H667.5L671.5 56.5V65.5H660.5Z" fill="#fff" stroke="#6B6B6B"/><path d="M667.5 52.5V56.5H671.5" fill="none" stroke="#6B6B6B"/><g fill="#888"><rect x="662" y="56" width="4" height="1"/><rect x="662" y="59" width="4" height="1"/><rect x="667" y="59" width="1" height="1"/><rect x="669" y="59" width="1" height="1"/><rect x="662" y="62" width="4" height="1"/><rect x="667" y="62" width="1" height="1"/><rect x="669" y="62" width="1" height="1"/></g><path d="M658.5 75.5H664.5L668.5 79.5V88.5H658.5Z" fill="#F3F0F4" stroke="#C6C6C6"/><path d="M664.5 75.5V79.5H668.5" fill="none" stroke="#C6C6C6"/><path d="M670.2 75H673.2L672.3 85H671Z" fill="#BDBDBD"/><circle cx="671.7" cy="87.3" r="1.4" fill="#BDBDBD"/><rect x="664.5" y="101.5" width="9" height="11" fill="#fff" stroke="#6B6B6B"/><rect x="658.5" y="97.5" width="9" height="11" fill="#fff" stroke="#6B6B6B"/><rect x="662" y="102" width="4" height="2" fill="#D24726"/><rect x="669" y="107" width="3" height="2" fill="#D24726"/><path d="M823.5 53.5H838.5L845.5 60.5V80.5H823.5Z" fill="#fff" stroke="#6B6B6B"/><path d="M838.5 53.5V60.5H845.5" fill="none" stroke="#6B6B6B"/><path d="M824 51V63M818 57H830" stroke="#4E9A7A" stroke-width="3"/><rect x="828" y="69" width="13" height="3" fill="#D24726"/><path d="M863.5 52.5H870.5L874.5 56.5V65.5H863.5Z" fill="#fff" stroke="#6B6B6B"/><path d="M870.5 52.5V56.5H874.5" fill="none" stroke="#6B6B6B"/><g fill="#888"><rect x="865" y="56" width="4" height="1"/><rect x="865" y="59" width="6" height="1"/><rect x="872" y="59" width="1" height="1"/><rect x="865" y="62" width="6" height="1"/><rect x="872" y="62" width="1" height="1"/></g><path d="M861.5 75.5H867.5L871.5 79.5V88.5H861.5Z" fill="#F3F0F4" stroke="#C6C6C6"/><path d="M867.5 75.5V79.5H871.5" fill="none" stroke="#C6C6C6"/><path d="M873 75H876L875.1 85H873.8Z" fill="#BDBDBD"/><circle cx="874.5" cy="87.3" r="1.4" fill="#BDBDBD"/></svg><svg style="left:0;top:0" width="938" height="480"><g fill="#787878"><rect x="270" y="448" width="3" height="2"/><rect x="270" y="452.5" width="3" height="2"/><rect x="270" y="457" width="3" height="2"/></g><path d="M280.5 449.5H287.5L290.5 452.5V461.5H280.5Z" fill="#fff" stroke="#6B6B6B"/><path d="M287.5 449.5V452.5H290.5" fill="none" stroke="#6B6B6B"/><rect x="283" y="451" width="3" height="2" fill="#2E6DB4"/><rect x="282" y="455" width="4" height="1" fill="#2E6DB4"/><rect x="287" y="455" width="1" height="1" fill="#2E6DB4"/><rect x="282" y="457" width="4" height="1" fill="#2E6DB4"/><rect x="287" y="457" width="1" height="1" fill="#2E6DB4"/><rect x="282" y="459" width="4" height="1" fill="#2E6DB4"/><rect x="287" y="459" width="1" height="1" fill="#2E6DB4"/><path d="M298 455H303.2L300.6 458Z" fill="#707070"/><path d="M311.5 448.5H318.5L321.5 451.5V461.5H311.5Z" fill="#fff" stroke="#6B6B6B"/><path d="M318.5 448.5V451.5H321.5" fill="none" stroke="#6B6B6B"/><path d="M323 448.3H326.3L325.2 458H324.1Z" fill="#D24726"/><circle cx="324.7" cy="460.2" r="1.4" fill="#D24726"/></svg><svg style="left:0;top:0" width="938" height="140"><g fill="none" stroke="#ED1C24" stroke-width="5"><rect x="-1.5" y="45.4" width="47" height="76.1" rx="7"/><rect x="320.7" y="13.6" width="106" height="46" rx="11"/></g></svg>
</body></html>
